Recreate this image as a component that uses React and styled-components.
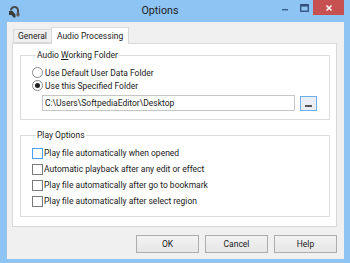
import React from "react";
import styled, { createGlobalStyle } from "styled-components";

const Global = createGlobalStyle`
  html, body { margin: 0; padding: 0; }
  body { width: 350px; height: 263px; overflow: hidden; background: #8bc3f2; }
  * { box-sizing: border-box; }
`;

const FONT = `Roboto, "Noto Sans", "Liberation Sans", sans-serif`;

const Window = styled.div`
  width: 350px;
  height: 263px;
  background: #8dc4f3;
  display: flex;
  flex-direction: column;
  font-family: ${FONT};
  font-size: 8.5px;
  color: #1a1a1a;
`;

const TitleBar = styled.div`
  height: 22px;
  display: flex;
  align-items: flex-start;
`;

const AppIcon = styled.div`
  width: 14px;
  height: 14px;
  margin: 5px 0 0 7px;
`;

const Title = styled.div`
  flex: 1;
  text-align: center;
  font-size: 10.7px;
  line-height: 22px;
  color: #222;
  padding-left: 24px;
`;

const Controls = styled.div`
  display: flex;
  align-items: flex-start;
  margin-right: 6px;
`;

const CtlBtn = styled.div`
  width: ${(p) => p.$w}px;
  height: 15px;
  display: flex;
  align-items: center;
  justify-content: center;
  background: ${(p) => (p.$close ? "#c75050" : "transparent")};
`;

const Client = styled.div`
  flex: 1;
  margin: 0 6px 4px 6px;
  background: #f0f0f0;
  display: flex;
  flex-direction: column;
  padding: 5px 7px 6px 5px;
  border-left: 1px solid #9fc0de;
`;

const TabRow = styled.div`
  height: 16px;
  display: flex;
  align-items: flex-end;
  padding-left: 1px;
  position: relative;
  z-index: 1;
`;

const Tab = styled.div`
  height: ${(p) => (p.$active ? 17 : 14)}px;
  margin-bottom: ${(p) => (p.$active ? -1 : 0)}px;
  padding: 0 ${(p) => (p.$active ? 5 : 4)}px;
  margin-left: ${(p) => (p.$active ? -1 : 0)}px;
  border: 1px solid #d9d9d9;
  border-bottom: ${(p) => (p.$active ? "none" : "1px solid #d9d9d9")};
  background: ${(p) => (p.$active ? "#fff" : "#f0f0f0")};
  display: flex;
  align-items: center;
  line-height: 1;
  padding-top: ${(p) => (p.$active ? 0 : 1)}px;
`;

const Panel = styled.div`
  height: 184px;
  border: 1px solid #d9d9d9;
  background: #fff;
  padding: 6px 6px 0 7px;
  display: flex;
  flex-direction: column;
  gap: 10px;
`;

const Group = styled.fieldset`
  margin: 0;
  padding: 0 0 0 11px;
  border: 1px solid #dcdcdc;
  display: flex;
  flex-direction: column;
  height: ${(p) => p.$h}px;
`;

const Legend = styled.legend`
  margin-left: 4px;
  padding: 0 1px;
  line-height: 11px;
  font-size: 8.5px;
`;

const OptionRow = styled.label`
  display: flex;
  align-items: center;
  height: ${(p) => p.$h || 13}px;
  margin-top: ${(p) => p.$mt || 0}px;
  gap: ${(p) => p.$gap || 2}px;
`;

const Radio = styled.span`
  width: 11px;
  height: 11px;
  border-radius: 50%;
  border: 1px solid #8a8a8a;
  background: #fff;
  display: flex;
  align-items: center;
  justify-content: center;
  &::after {
    content: "";
    width: 5px;
    height: 5px;
    border-radius: 50%;
    background: ${(p) => (p.$checked ? "#222" : "transparent")};
  }
`;

const Check = styled.span`
  width: 11px;
  height: 11px;
  border: 1px solid ${(p) => (p.$hover ? "#4aa0f0" : "#7a7a7a")};
  background: #fff;
`;

const PathRow = styled.div`
  display: flex;
  align-items: center;
  margin-top: 3px;
  margin-left: 10px;
`;

const PathInput = styled.div`
  width: 253px;
  height: 16px;
  border: 1px solid #c5c5c5;
  background: #fff;
  padding-left: 2px;
  display: flex;
  align-items: center;
`;

const Browse = styled.div`
  width: 17px;
  height: 15px;
  margin-left: 5px;
  border: 1px solid #6eaeea;
  background: #e8eef4;
  display: flex;
  align-items: flex-end;
  justify-content: center;
  padding-bottom: 3px;
  &::after {
    content: "";
    width: 7px;
    height: 2px;
    background: #555;
  }
`;

const CheckList = styled.div`
  display: flex;
  flex-direction: column;
  padding-top: 4px;
`;

const ButtonRow = styled.div`
  display: flex;
  justify-content: flex-end;
  gap: 6px;
  margin-top: 8px;
`;

const Button = styled.div`
  width: 63px;
  height: 18px;
  border: 1px solid #adadad;
  background: linear-gradient(#f2f2f2, #e6e6e6);
  display: flex;
  align-items: center;
  justify-content: center;
`;

export default function App() {
  return (
    <Window>
      <Global />
      <TitleBar>
        <AppIcon>
          <svg width="14" height="14" viewBox="0 0 14 14">
            <path d="M3 5.5 C3 2.5 5 1 7.5 1 C10 1 12 3 12 5.5 L12 8 L10 8 L10 5.5 C10 4 9 3 7.5 3 C6 3 5 4 5 5.5 Z" fill="#4a4a4a" />
            <path d="M2 6 L5.5 6 L8.5 9.5 L8.5 12.5 L6.5 12.5 L4.5 10 L2 10 Z" fill="#3a3a3a" />
            <rect x="9.5" y="7.5" width="3" height="4" rx="1" fill="#5a5a5a" />
          </svg>
        </AppIcon>
        <Title>Options</Title>
        <Controls>
          <CtlBtn $w={20}>
            <svg width="8" height="8" viewBox="0 0 8 8">
              <rect x="1" y="5" width="6" height="1.4" fill="#3a5f8a" />
            </svg>
          </CtlBtn>
          <CtlBtn $w={18}>
            <svg width="9" height="8" viewBox="0 0 9 8">
              <rect x="0.75" y="0.75" width="7.5" height="6.5" fill="none" stroke="#2e4f78" strokeWidth="1.3" />
              <rect x="0.5" y="0.5" width="8" height="2" fill="#2e4f78" />
            </svg>
          </CtlBtn>
          <CtlBtn $w={31} $close>
            <svg width="8" height="8" viewBox="0 0 8 8">
              <path d="M1.5 1.5 L6.5 6.5 M6.5 1.5 L1.5 6.5" stroke="#fff" strokeWidth="1.5" />
            </svg>
          </CtlBtn>
        </Controls>
      </TitleBar>
      <Client>
        <TabRow>
          <Tab>General</Tab>
          <Tab $active>Audio Processing</Tab>
        </TabRow>
        <Panel>
          <Group $h={70}>
            <Legend>
              Audio <u>W</u>orking Folder
            </Legend>
            <OptionRow $mt={5}>
              <Radio />
              Use Default User Data Folder
            </OptionRow>
            <OptionRow>
              <Radio $checked />
              Use this Specified Folder
            </OptionRow>
            <PathRow>
              <PathInput>C:\Users\SoftpediaEditor\Desktop</PathInput>
              <Browse />
            </PathRow>
          </Group>
          <Group $h={87}>
            <Legend>Play Options</Legend>
            <CheckList>
              <OptionRow $h={16} $gap={1}>
                <Check $hover />
                Play file automatically when opened
              </OptionRow>
              <OptionRow $h={16} $gap={1}>
                <Check />
                Automatic playback after any edit or effect
              </OptionRow>
              <OptionRow $h={16} $gap={1}>
                <Check />
                Play file automatically after go to bookmark
              </OptionRow>
              <OptionRow $h={16} $gap={1}>
                <Check />
                Play file automatically after select region
              </OptionRow>
            </CheckList>
          </Group>
        </Panel>
        <ButtonRow>
          <Button>OK</Button>
          <Button>Cancel</Button>
          <Button>Help</Button>
        </ButtonRow>
      </Client>
    </Window>
  );
}
